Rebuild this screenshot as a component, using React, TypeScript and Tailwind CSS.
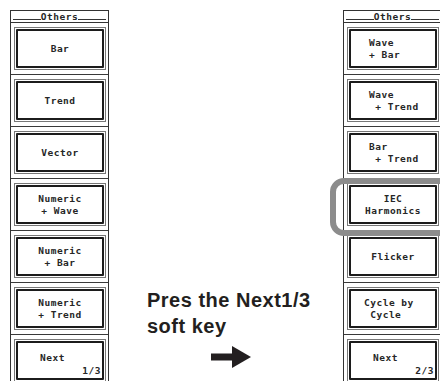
const mono = "font-['DejaVu_Sans_Mono',monospace]";

type KeyProps = { lines: string[]; pad?: string; next?: string };

function SoftKey({ lines, pad, next }: KeyProps) {
  return (
    <div className="border-b border-[#3a3a3a] pl-[3px] pr-[2px] pt-[4px] pb-[4px]">
      <div className="h-[43px] border border-[#777] p-px">
        <div className="relative h-full border-2 border-[#1c1c1c] rounded-[1px]">
          {next ? (
            <div className="flex h-full flex-col px-px pt-[9px]">
              <span className="pl-[21px] leading-[12px]">{lines[0]}</span>
              <span className="self-end leading-[12px] pt-px">{next}</span>
            </div>
          ) : (
            <div
              className={`flex h-full flex-col justify-center whitespace-pre leading-[12px] ${pad ?? "items-center"}`}
            >
              {lines.map((l) => (
                <span key={l}>{l}</span>
              ))}
            </div>
          )}
        </div>
      </div>
    </div>
  );
}

function Panel({ keys }: { keys: KeyProps[] }) {
  return (
    <div className={`w-[99px] shrink-0 border-x border-t border-[#333] text-[9.5px] font-bold tracking-[0.5px] text-[#262626] ${mono}`}>
      <div className="flex h-[12px] items-end border-b border-[#333] px-[2px]">
        <div className="mb-[2px] h-px flex-1 bg-[#333]" />
        <span className="leading-[11px]">Others</span>
        <div className="mb-[2px] h-px flex-1 bg-[#333]" />
      </div>
      {keys.map((k, i) => (
        <SoftKey key={i} {...k} />
      ))}
    </div>
  );
}

const leftKeys: KeyProps[] = [
  { lines: ["Bar"] },
  { lines: ["Trend"] },
  { lines: ["Vector"] },
  { lines: ["Numeric", "+ Wave"] },
  { lines: ["Numeric", "+ Bar"] },
  { lines: ["Numeric", "+ Trend"] },
  { lines: ["Next"], next: "1/3" },
];

const rightKeys: KeyProps[] = [
  { lines: ["Wave", "+ Bar"], pad: "items-start pl-[18px]" },
  { lines: ["Wave", " + Trend"], pad: "items-start pl-[18px]" },
  { lines: ["Bar", " + Trend"], pad: "items-start pl-[18px]" },
  { lines: ["IEC", "Harmonics"] },
  { lines: ["Flicker"] },
  { lines: ["Cycle by", " Cycle"], pad: "items-start pl-[13px]" },
  { lines: ["Next"], next: "2/3" },
];

export default function App() {
  return (
    <div className="relative h-[381px] w-[440px] overflow-hidden bg-white">
      <div className="flex pl-[10px] pt-[10px]">
        <Panel keys={leftKeys} />

        <div className="flex w-[234px] shrink-0 flex-col pl-[38px] pt-[277px]">
          <p className="font-['Liberation_Sans',Arial,sans-serif] text-[20px] font-bold leading-[26px] tracking-[0.5px] text-[#231f20]">
            Pres the Next1/3
            <br />
            soft key
          </p>
          <svg className="ml-[64px] mt-[7px]" width="40" height="22" viewBox="0 0 40 22">
            <rect x="0" y="7.5" width="22" height="7" fill="#231f20" />
            <polygon points="21,0 40,11 21,22" fill="#231f20" />
          </svg>
        </div>

        <Panel keys={rightKeys} />
      </div>

      {/* highlight ring around IEC Harmonics */}
      <div className="absolute left-[330px] top-[178px] h-[58px] w-[130px] rounded-[14px] border-[6px] border-[#8c8c8c]" />
    </div>
  );
}
